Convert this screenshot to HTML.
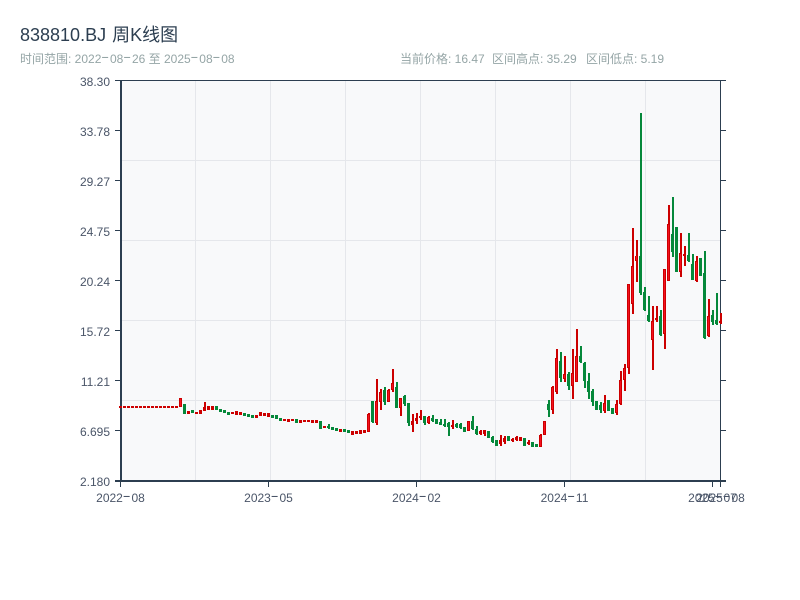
<!DOCTYPE html>
<html><head><meta charset="utf-8"><style>
html,body{margin:0;padding:0;background:#fff;width:800px;height:600px;overflow:hidden}
svg{display:block}
text{font-family:"Liberation Sans","WenQuanYi Zen Hei",sans-serif}
tspan.h{font-family:"IPAGothic",sans-serif;font-size:15px;letter-spacing:1.1px}
.n path{vector-effect:non-scaling-stroke;fill:none}
</style></head><body>
<svg width="800" height="600" viewBox="0 0 800 600" shape-rendering="crispEdges">
<rect width="800" height="600" fill="#fff"/>
<text x="20" y="41" font-size="18" fill="#2c3e50">838810.BJ <tspan dx="1">周K线图</tspan></text>
<text x="20" y="63" font-size="12" fill="#95a5a6">时间范围: 2022<tspan class="h">-</tspan>08<tspan class="h">-</tspan>26 至 2025<tspan class="h">-</tspan>08<tspan class="h">-</tspan>08</text>
<text x="400" y="63" font-size="12" fill="#95a5a6">当前价格: 16.47</text>
<text x="492" y="63" font-size="12" fill="#95a5a6">区间高点: 35.29</text>
<text x="586" y="63" font-size="12" fill="#95a5a6">区间低点: 5.19</text>
<rect x="121" y="81" width="599" height="400" fill="#f8f9fa"/>
<g fill="#e5e7eb">
<rect x="195" y="81" width="1" height="400"/><rect x="270" y="81" width="1" height="400"/><rect x="345" y="81" width="1" height="400"/><rect x="420" y="81" width="1" height="400"/><rect x="495" y="81" width="1" height="400"/><rect x="570" y="81" width="1" height="400"/><rect x="645" y="81" width="1" height="400"/>
<rect x="121" y="160" width="599" height="1"/><rect x="121" y="240" width="599" height="1"/><rect x="121" y="320" width="599" height="1"/><rect x="121" y="400" width="599" height="1"/>
</g>
<g fill="#2c3e50">
<rect x="120" y="81" width="2" height="401"/>
<rect x="115" y="480" width="611" height="2"/>
<rect x="115" y="80" width="611" height="1"/>
<rect x="720" y="80" width="1" height="401"/>
<rect x="115" y="130" width="5" height="1"/><rect x="115" y="180" width="5" height="1"/><rect x="115" y="230" width="5" height="1"/><rect x="115" y="280" width="5" height="1"/><rect x="115" y="330" width="5" height="1"/><rect x="115" y="380" width="5" height="1"/><rect x="115" y="430" width="5" height="1"/>
<rect x="721" y="130" width="5" height="1"/><rect x="721" y="180" width="5" height="1"/><rect x="721" y="230" width="5" height="1"/><rect x="721" y="280" width="5" height="1"/><rect x="721" y="330" width="5" height="1"/><rect x="721" y="380" width="5" height="1"/><rect x="721" y="430" width="5" height="1"/>
<rect x="120" y="482" width="1" height="5"/><rect x="268" y="482" width="1" height="5"/><rect x="416" y="482" width="1" height="5"/><rect x="564" y="482" width="1" height="5"/><rect x="712" y="482" width="1" height="5"/><rect x="720" y="482" width="1" height="5"/>
</g>
<g font-size="12" fill="#4a5568" text-anchor="end">
<text x="110" y="86">38.30</text><text x="110" y="136">33.78</text><text x="110" y="186">29.27</text><text x="110" y="236">24.75</text><text x="110" y="286">20.24</text><text x="110" y="336">15.72</text><text x="110" y="386">11.21</text><text x="110" y="436">6.695</text><text x="110" y="486">2.180</text>
</g>
<g font-size="12" fill="#4a5568" text-anchor="middle">
<text x="120.5" y="502">2022<tspan class="h">-</tspan>08</text><text x="268.5" y="502">2023<tspan class="h">-</tspan>05</text><text x="416.5" y="502">2024<tspan class="h">-</tspan>02</text><text x="564.5" y="502">2024<tspan class="h">-</tspan>11</text><text x="712.5" y="502">2025<tspan class="h">-</tspan>07</text><text x="720.5" y="502">2025<tspan class="h">-</tspan>08</text>
</g>
<g class="n">
<path transform="translate(121 0) scale(4 1)" stroke="#05883a" stroke-width="2" d="M52 424V429M63 401V423M66 387V405M69 382V408M71 395V406M72 403V426M76 416V425M78 415V422M80 419V425M81 419V427M82 422V436M84 423V428M85 423V429M88 416V430M89 426V435M93 436V443M107 400V417M110 352V382M112 372V390M115 346V363M116 362V388M117 373V399M118 389V406M120 402V413M130 113V295M131 287V311M132 296V322M135 310V336M138 197V257M142 233V262M143 254V280M146 251V339M148 310V325M149 293V325"/>
<path transform="translate(120.5 0) scale(4 1)" stroke="#05883a" stroke-width="3" d="M16 404V414M18 410V413M24 406V410M25 409V412M26 410V413M27 412V415M31 413V416M32 414V417M33 415V418M38 415V418M39 415V419M40 418V421M44 419V423M50 421V429M52 426V428M53 427V430M54 428V431M56 429V432M57 430V433M63 401V422M66 390V402M69 387V408M71 396V404M72 403V423M76 416V423M78 418V421M79 419V424M80 422V425M81 424V426M82 423V427M84 424V427M85 424V428M86 427V432M88 421V429M89 429V434M92 431V438M93 437V442M94 440V446M97 436V441M101 438V446M103 442V447M104 444V447M107 404V410M110 361V378M112 374V386M115 356V362M116 363V381M117 381V392M118 391V402M119 401V410M120 405V410M122 400V411M123 408V414M130 256V293M131 292V310M132 315V321M135 316V335M138 234V252M139 227V272M142 255V261M143 264V280M145 258V276M146 273V338M148 315V322M149 320V324"/>
<path transform="translate(121 0) scale(4 1)" stroke="#cc0000" stroke-width="2" d="M21 402V411M62 413V432M64 379V425M65 389V410M67 389V402M68 369V392M70 398V416M73 414V432M74 413V424M75 410V420M77 416V424M83 420V429M90 430V435M91 430V436M95 435V446M96 436V444M98 438V442M99 436V441M102 440V445M105 434V447M108 386V414M109 349V394M111 356V382M113 349V399M114 329V382M121 395V413M124 400V415M125 371V405M126 364V391M127 284V374M128 228V314M129 240V282M133 306V370M134 306V322M136 269V349M137 205V281M140 233V277M141 246V266M144 256V282M147 299V337M150 313V324"/>
<path transform="translate(120.5 0) scale(4 1)" stroke="#cc0000" stroke-width="3" d="M0 406V408M1 406V408M2 406V408M3 406V408M4 406V408M5 406V408M6 406V408M7 406V408M8 406V408M9 406V408M10 406V408M11 406V408M12 406V408M13 406V408M14 406V408M15 398V407M17 411V414M19 412V414M20 410V414M21 407V411M22 406V410M23 406V410M28 412V414M29 411V415M30 412V415M34 415V418M35 412V416M36 413V416M37 413V417M41 419V421M42 419V422M43 419V421M45 420V423M46 420V422M47 420V422M48 420V423M49 420V423M51 426V428M55 429V432M58 431V435M59 431V434M60 430V434M61 430V433M62 414V432M64 401V423M65 392V402M67 390V402M68 383V390M70 398V408M73 421V425M74 418V421M75 416V418M77 417V423M83 425V427M87 421V431M90 431V434M91 430V434M95 440V444M96 438V442M98 439V441M99 437V440M100 437V441M102 442V444M105 435V447M106 421V435M108 387V410M109 358V392M111 374V379M113 373V386M114 356V382M121 403V411M124 404V413M125 380V404M126 368V380M127 284V368M128 266V304M129 256V261M133 321V340M134 318V320M136 269V334M137 224V281M140 253V272M141 254V256M144 261V281M147 316V336M150 321V323"/>
<path transform="translate(120.5 0) scale(4 1)" stroke="#f5101f" stroke-width="1" d="M15 399V406M62 415V431M64 402V422M65 393V401M67 391V401M68 384V389M70 399V407M77 418V422M87 422V430M105 436V446M106 422V434M108 388V409M109 359V391M111 375V378M113 374V385M114 357V381M121 404V410M124 405V412M125 381V403M126 369V379M127 285V367M128 267V303M129 256V260M133 322V339M136 270V333M137 225V280M140 254V271M144 262V280M147 317V335"/>
</g>
</svg>
</body></html>
